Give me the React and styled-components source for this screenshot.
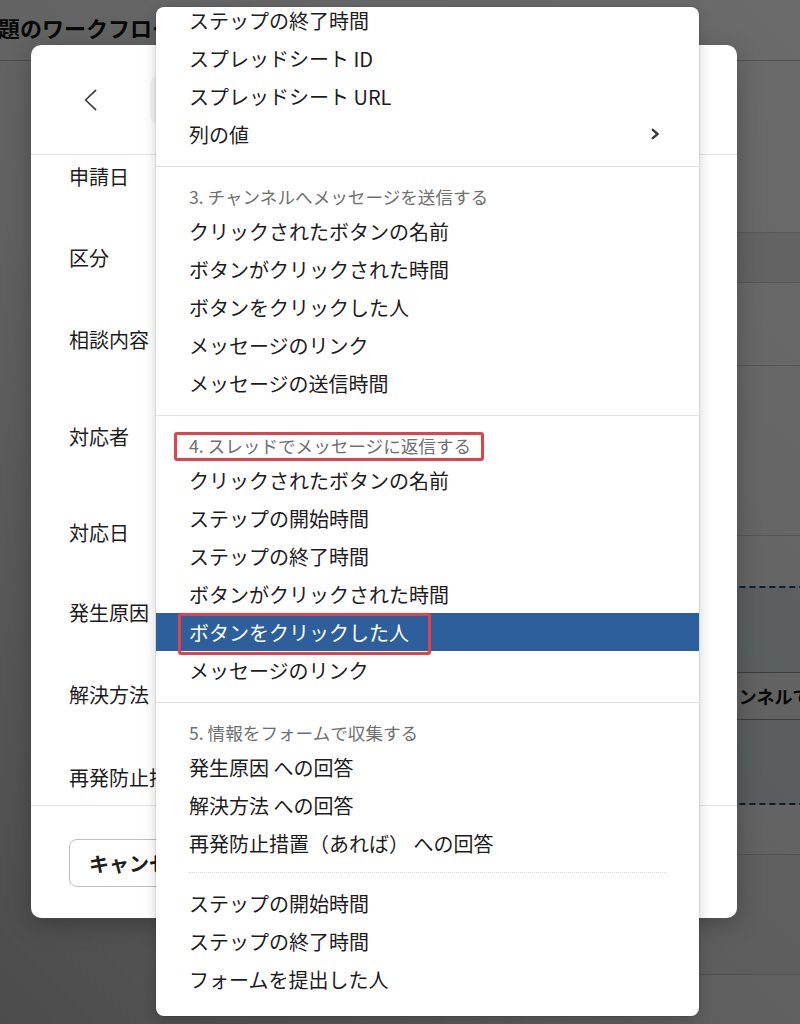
import React from "react";
import styled, { createGlobalStyle } from "styled-components";

const GlobalStyle = createGlobalStyle`
  html, body {
    margin: 0;
    padding: 0;
  }
  body {
    font-family: "Noto Sans CJK JP", "Noto Sans", sans-serif;
    color: #1d1c1d;
    background: #fff;
  }
`;

const Screen = styled.div`
  position: relative;
  width: 800px;
  height: 1024px;
  overflow: hidden;
  background: #fff;
`;

/* ---------- page behind the dialog ---------- */

const PageHeader = styled.header`
  height: 61px;
  box-sizing: border-box;
  border-bottom: 1px solid #c4c4c4;
  display: flex;
  align-items: center;
  padding-bottom: 6px;
  overflow: hidden;
`;

const PageTitle = styled.h1`
  margin: 0 0 0 -2px;
  font-size: 22px;
  font-weight: 700;
  white-space: nowrap;
  color: #111;
`;

const PageMain = styled.div`
  display: grid;
  grid-template-columns: 560px 1fr;
`;

const FlowCol = styled.div`
  display: flex;
  flex-direction: column;
`;

const FlowRow = styled.div`
  height: ${(p) => p.$h}px;
  box-sizing: border-box;
  border-bottom: ${(p) => (p.$noLine ? "none" : "1px solid #d6d6d6")};
  background: ${(p) => p.$bg || "#fff"};
`;

const DropCard = styled.div`
  height: 219px;
  box-sizing: border-box;
  border-top: 2px dashed #1d4f80;
  border-bottom: 2px dashed #1d4f80;
  background: #e6f1f7;
  display: flex;
  align-items: center;
  padding-left: 120px;
`;

const GhostButton = styled.div`
  height: 48px;
  box-sizing: border-box;
  display: flex;
  align-items: center;
  padding: 0 22px;
  background: #fafafa;
  border: 1px solid #9a9a9a;
  font-size: 18px;
  font-weight: 700;
  white-space: nowrap;
  color: #111;
`;

const Overlay = styled.div`
  position: absolute;
  inset: 0;
  background: linear-gradient(
    45deg,
    rgba(0, 0, 0, 0.7) 0%,
    rgba(0, 0, 0, 0.62) 45%,
    rgba(0, 0, 0, 0.58) 100%
  );
`;

/* ---------- dialog ---------- */

const Modal = styled.div`
  position: absolute;
  left: 31px;
  top: 45px;
  width: 706px;
  height: 873px;
  background: #fff;
  border-radius: 10px;
  display: flex;
  flex-direction: column;
  overflow: hidden;
  box-shadow: 0 6px 24px rgba(0, 0, 0, 0.25);
`;

const ModalHeader = styled.div`
  height: 110px;
  flex-shrink: 0;
  box-sizing: border-box;
  border-bottom: 1px solid #e3e3e3;
  display: flex;
  align-items: center;
  padding-left: 40px;
  gap: 39px;
`;

const BackButton = styled.button`
  width: 40px;
  height: 40px;
  padding: 0;
  border: none;
  background: none;
  display: flex;
  align-items: center;
  justify-content: center;
`;

const SearchBox = styled.div`
  flex: 1;
  height: 48px;
  margin-right: 56px;
  border-radius: 8px;
  background: #f3f3f3;
`;

const ModalBody = styled.div`
  flex: 1;
  overflow: hidden;
  padding-top: 7px;
`;

const FieldRow = styled.div`
  height: ${(p) => p.$h}px;
  padding-left: 38px;
`;

const FieldLabel = styled.div`
  font-size: 20px;
  line-height: 30px;
  white-space: nowrap;
  color: #1d1c1d;
`;

const ModalFooter = styled.div`
  height: 113px;
  flex-shrink: 0;
  box-sizing: border-box;
  border-top: 1px solid #e3e3e3;
  padding: 33px 38px 0;
  display: flex;
  align-items: flex-start;
`;

const CancelButton = styled.button`
  height: 48px;
  padding: 0 19px;
  border: 1px solid #bdbdbd;
  border-radius: 8px;
  background: #fff;
  font-family: inherit;
  font-size: 20px;
  font-weight: 700;
  color: #1d1c1d;
`;

/* ---------- variable picker menu ---------- */

const Menu = styled.div`
  position: absolute;
  left: 156px;
  top: 7px;
  width: 543px;
  height: 1009px;
  background: #fff;
  border-radius: 8px;
  overflow: hidden;
  box-shadow: 0 0 0 1px rgba(0, 0, 0, 0.08), 0 4px 14px rgba(0, 0, 0, 0.18);
`;

const MenuScroll = styled.div`
  margin-top: -19px;
`;

const Section = styled.div`
  padding: 13px 0;
  border-top: ${(p) => (p.$first ? "none" : "1px solid #e3e3e3")};
`;

const SectionTitle = styled.div`
  position: relative;
  height: 32px;
  display: flex;
  align-items: center;
  padding-left: 33px;
  font-size: 17.6px;
  color: #6f6f6f;
  white-space: nowrap;
`;

const MenuItem = styled.div`
  position: relative;
  height: 38px;
  display: flex;
  align-items: center;
  justify-content: space-between;
  padding: 0 40px 0 33px;
  font-size: 20px;
  white-space: nowrap;
  color: ${(p) => (p.$active ? "#fff" : "#1d1c1d")};
  background: ${(p) => (p.$active ? "#2c5f9b" : "transparent")};
`;

const DottedRule = styled.div`
  margin: 10px 32px 11px 33px;
  border-top: 1px dotted #d8d8d8;
`;

const Mark = styled.span`
  position: absolute;
  left: ${(p) => p.$x}px;
  top: ${(p) => p.$y}px;
  width: ${(p) => p.$w}px;
  height: ${(p) => p.$h}px;
  box-sizing: border-box;
  border: 3px solid #e2434b;
  border-radius: 3px;
  pointer-events: none;
`;

const Chevron = ({ dir = "right", size = 12, stroke = 2 }) => (
  <svg
    width={dir === "right" ? size * 0.7 : size * 0.6}
    height={size}
    viewBox={dir === "right" ? "0 0 7 10" : "0 0 14 24"}
    fill="none"
    stroke="#3a3a3a"
    strokeWidth={stroke}
    strokeLinecap="round"
    strokeLinejoin="round"
  >
    {dir === "right" ? (
      <polyline points="1.5,1.5 5.5,5 1.5,8.5" />
    ) : (
      <polyline points="12.5,1.5 1.5,12 12.5,22.5" />
    )}
  </svg>
);

const fields = [
  { label: "申請日", h: 81 },
  { label: "区分", h: 82 },
  { label: "相談内容", h: 97 },
  { label: "対応者", h: 96 },
  { label: "対応日", h: 80 },
  { label: "発生原因", h: 82 },
  { label: "解決方法", h: 83 },
  { label: "再発防止措置（あれば）", h: 80 },
];

export default function App() {
  return (
    <Screen>
      <GlobalStyle />

      <PageHeader>
        <PageTitle>題のワークフロー</PageTitle>
      </PageHeader>
      <PageMain>
        <div />
        <FlowCol>
          <FlowRow $h={172} />
          <FlowRow $h={50} $bg="#f2f2f2" />
          <FlowRow $h={83} />
          <FlowRow $h={170} />
          <FlowRow $h={50} $noLine />
          <DropCard>
            <GhostButton>チャンネルで送信する</GhostButton>
          </DropCard>
          <FlowRow $h={50} />
          <FlowRow $h={120} $bg="#f7f7f7" />
        </FlowCol>
      </PageMain>

      <Overlay />

      <Modal>
        <ModalHeader>
          <BackButton aria-label="戻る">
            <Chevron dir="left" size={22} stroke={1.8} />
          </BackButton>
          <SearchBox />
        </ModalHeader>
        <ModalBody>
          {fields.map((f) => (
            <FieldRow key={f.label} $h={f.h}>
              <FieldLabel>{f.label}</FieldLabel>
            </FieldRow>
          ))}
        </ModalBody>
        <ModalFooter>
          <CancelButton>キャンセル</CancelButton>
        </ModalFooter>
      </Modal>

      <Menu>
        <MenuScroll>
          <Section $first>
            <MenuItem>ステップの終了時間</MenuItem>
            <MenuItem>スプレッドシート ID</MenuItem>
            <MenuItem>スプレッドシート URL</MenuItem>
            <MenuItem>
              列の値
              <Chevron />
            </MenuItem>
          </Section>

          <Section>
            <SectionTitle>3. チャンネルへメッセージを送信する</SectionTitle>
            <MenuItem>クリックされたボタンの名前</MenuItem>
            <MenuItem>ボタンがクリックされた時間</MenuItem>
            <MenuItem>ボタンをクリックした人</MenuItem>
            <MenuItem>メッセージのリンク</MenuItem>
            <MenuItem>メッセージの送信時間</MenuItem>
          </Section>

          <Section>
            <SectionTitle>
              4. スレッドでメッセージに返信する
              <Mark $x={18} $y={3} $w={310} $h={29} />
            </SectionTitle>
            <MenuItem>クリックされたボタンの名前</MenuItem>
            <MenuItem>ステップの開始時間</MenuItem>
            <MenuItem>ステップの終了時間</MenuItem>
            <MenuItem>ボタンがクリックされた時間</MenuItem>
            <MenuItem $active>
              ボタンをクリックした人
              <Mark $x={22} $y={0} $w={253} $h={42} />
            </MenuItem>
            <MenuItem>メッセージのリンク</MenuItem>
          </Section>

          <Section>
            <SectionTitle>5. 情報をフォームで収集する</SectionTitle>
            <MenuItem>発生原因 への回答</MenuItem>
            <MenuItem>解決方法 への回答</MenuItem>
            <MenuItem>再発防止措置（あれば） への回答</MenuItem>
            <DottedRule />
            <MenuItem>ステップの開始時間</MenuItem>
            <MenuItem>ステップの終了時間</MenuItem>
            <MenuItem>フォームを提出した人</MenuItem>
          </Section>
        </MenuScroll>
      </Menu>
    </Screen>
  );
}
